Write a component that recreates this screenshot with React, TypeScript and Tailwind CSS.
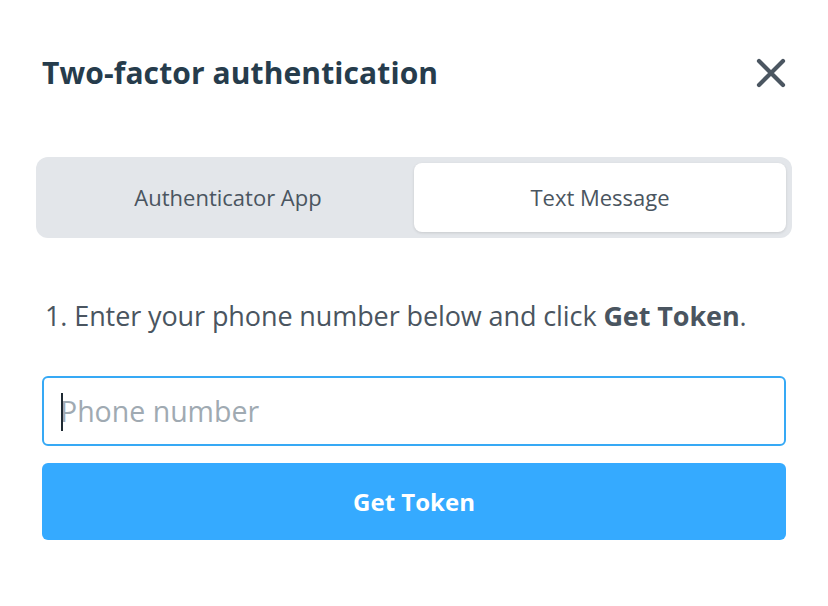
import React from "react";

export default function App() {
  return (
    <div className="w-[828px] h-[606px] bg-white font-['Open_Sans',sans-serif] text-[#4a5560]">
      <div className="px-[42px] pt-[54px]">
        <div className="flex items-center justify-between h-[38px]">
          <h1 className="text-[30px] leading-[38px] font-bold text-[#263c4c] tracking-[0.1px]">Two-factor authentication</h1>
          <svg width="32" height="32" viewBox="0 0 32 32" className="mr-[-1px]">
            <path d="M4 4 L28 28 M28 4 L4 28" stroke="#4b5661" strokeWidth="4.2" strokeLinecap="round" />
          </svg>
        </div>
      </div>
      <div className="mx-[36px] mt-[65px] h-[81px] rounded-[12px] bg-[#e3e6ea] p-[6px] flex">
        <button className="flex-1 text-[22px] text-[#4a5560] flex items-center justify-center">Authenticator App</button>
        <button className="flex-1 text-[22px] text-[#4a5560] bg-white rounded-[8px] shadow-[0_1px_3px_rgba(0,0,0,0.12)] flex items-center justify-center">Text Message</button>
      </div>
      <p className="mx-[45px] mt-[62px] text-[27px] leading-[32px] text-[#4a5560] whitespace-nowrap tracking-[-0.1px]">
        1. Enter your phone number below and click <span className="font-bold">Get Token</span>.
      </p>
      <div className="mx-[42px] mt-[44px]">
        <div className="h-[70px] border-2 border-[#36a9f5] rounded-[6px] flex items-center px-[16px] relative">
          <span className="absolute left-[17px] top-[15px] w-[2px] h-[38px] bg-[#1f2a33]" />
          <input
            className="w-full outline-none text-[28.5px] placeholder:text-[#a0aab2] bg-transparent font-['Open_Sans',sans-serif]"
            placeholder="Phone number"
          />
        </div>
        <button className="mt-[17px] w-full h-[77px] rounded-[6px] bg-[#35aaff] text-white text-[24px] font-bold flex items-center justify-center">
          Get Token
        </button>
      </div>
    </div>
  );
}
